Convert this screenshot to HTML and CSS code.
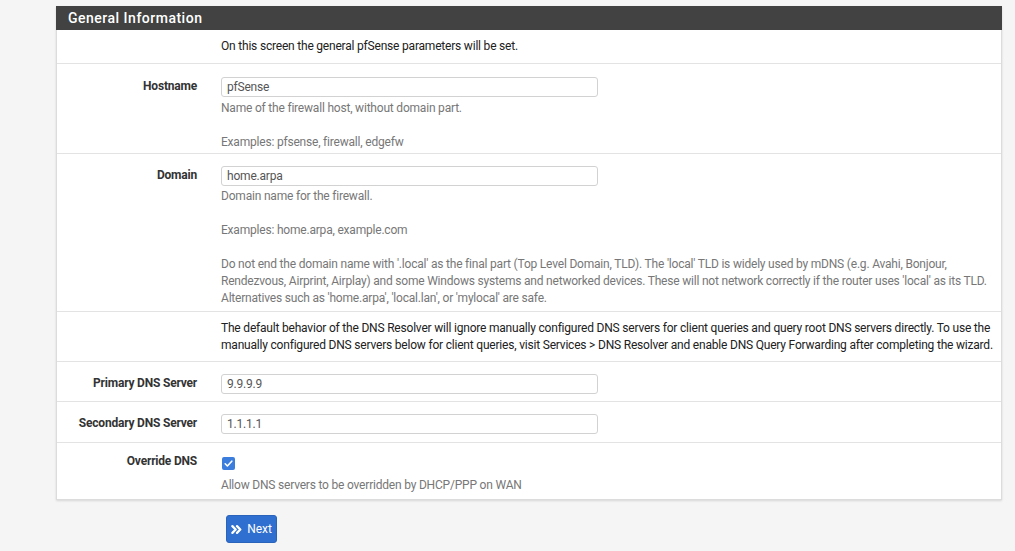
FILE: index.html
```html
<!DOCTYPE html>
<html>
<head>
<meta charset="utf-8">
<link rel="stylesheet" href="styles.css">
</head>
<body>
<div class="page">
  <div class="panel">
    <div class="panel-heading">General Information</div>
    <div class="row note">
      <div class="lbl"></div>
      <div class="content intro">On this screen the general pfSense parameters will be set.</div>
    </div>
    <div class="row host">
      <div class="lbl">Hostname</div>
      <div class="content">
        <div class="input">pfSense</div>
        <div class="help">Name of the firewall host, without domain part.<br><br>Examples: pfsense, firewall, edgefw</div>
      </div>
    </div>
    <div class="row">
      <div class="lbl">Domain</div>
      <div class="content">
        <div class="input">home.arpa</div>
        <div class="help">Domain name for the firewall.<br><br>Examples: home.arpa, example.com<br><br>Do not end the domain name with '.local' as the final part (Top Level Domain, TLD). The 'local' TLD is widely used by mDNS (e.g. Avahi, Bonjour, Rendezvous, Airprint, Airplay) and some Windows systems and networked devices. These will not network correctly if the router uses 'local' as its TLD. Alternatives such as 'home.arpa', 'local.lan', or 'mylocal' are safe.</div>
      </div>
    </div>
    <div class="row note">
      <div class="lbl"></div>
      <div class="content intro">The default behavior of the DNS Resolver will ignore manually configured DNS servers for client queries and query root DNS servers directly. To use the manually configured DNS servers below for client queries, visit Services &gt; DNS Resolver and enable DNS Query Forwarding after completing the wizard.</div>
    </div>
    <div class="row compact first-dns">
      <div class="lbl">Primary DNS Server</div>
      <div class="content">
        <div class="input">9.9.9.9</div>
      </div>
    </div>
    <div class="row compact">
      <div class="lbl">Secondary DNS Server</div>
      <div class="content">
        <div class="input">1.1.1.1</div>
      </div>
    </div>
    <div class="row last">
      <div class="lbl">Override DNS</div>
      <div class="content">
        <div class="checkbox"><svg width="13" height="13" viewBox="0 0 13 13"><rect width="13" height="13" rx="2" fill="#3b7ddd"/><path d="M3.2 6.8 L5.4 9 L9.8 4.2" fill="none" stroke="#fff" stroke-width="1.6" stroke-linecap="round" stroke-linejoin="round"/></svg></div>
        <div class="help">Allow DNS servers to be overridden by DHCP/PPP on WAN</div>
      </div>
    </div>
  </div>
  <div class="actions">
    <button class="btn"><svg width="13" height="11" viewBox="0 0 13 11"><path d="M1.6 1.6 L5.4 5.5 L1.6 9.4 M7 1.6 L10.8 5.5 L7 9.4" fill="none" stroke="#fff" stroke-width="2.6" stroke-linecap="round" stroke-linejoin="round"/></svg><span>Next</span></button>
  </div>
</div>
</body>
</html>
```
FILE: styles.css
```css
html, body {
  margin: 0;
  padding: 0;
  background: #f5f5f5;
  font-family: Roboto, "Liberation Sans", sans-serif;
  font-size: 12px;
  line-height: 17px;
  letter-spacing: -0.2px;
  color: #212121;
}
.page {
  padding: 6px 13px 0 56px;
}
.panel {
  background: #fff;
  border: 1px solid #dcdcdc;
  border-top: none;
  box-shadow: 0 1px 2px rgba(0,0,0,0.12);
}
.panel-heading {
  background: #424242;
  color: #fff;
  font-size: 14px;
  font-weight: 500;
  letter-spacing: 0.5px;
  height: 24px;
  line-height: 24px;
  padding-left: 12px;
  margin: 0 -1px;
}
.row {
  display: flex;
  border-top: 1px solid #e3e3e3;
  padding: 12px 0 4px;
}
.panel-heading + .row {
  border-top: none;
}
.row.note {
  padding: 8px 0 7px;
}
.panel-heading + .row.note {
  padding: 8px 0 8px;
}
.row.host {
  padding: 13px 0 2px;
}
.row.host .help {
  margin-top: 3px;
}
.row.compact {
  padding: 12px 0 8px;
}
.row.compact.first-dns {
  padding-bottom: 7px;
}
.row.last {
  padding: 10px 0 5px;
}
.lbl {
  width: 140px;
  flex: none;
  text-align: right;
  font-weight: 700;
  color: #333;
  padding-right: 24px;
  padding-top: 1px;
}
.row.last .lbl {
  padding-top: 0;
}
.content {
  flex: 1;
  padding-right: 0;
}
.intro {
  color: #212121;
}
.input {
  width: 365px;
  height: 18px;
  border: 1px solid #d2d2d2;
  border-radius: 3px;
  padding: 0 5px;
  line-height: 18px;
  color: #555;
  font-size: 12px;
}
.help {
  color: #777;
  margin-top: 2px;
}
.checkbox {
  height: 13px;
  margin: 4px 0 0 1px;
  line-height: 0;
}
.row.last .help {
  margin-top: 7px;
}
.actions {
  padding: 15px 0 0 170px;
}
.btn {
  display: inline-flex;
  align-items: center;
  gap: 5px;
  height: 28px;
  padding: 0 4px 0 4px;
  width: 51px;
  background: #2f6fcf;
  border: 1px solid #2a63ba;
  border-radius: 3px;
  color: #fff;
  font-family: Roboto, "Liberation Sans", sans-serif;
  font-size: 12px;
  letter-spacing: 0;
}
```
